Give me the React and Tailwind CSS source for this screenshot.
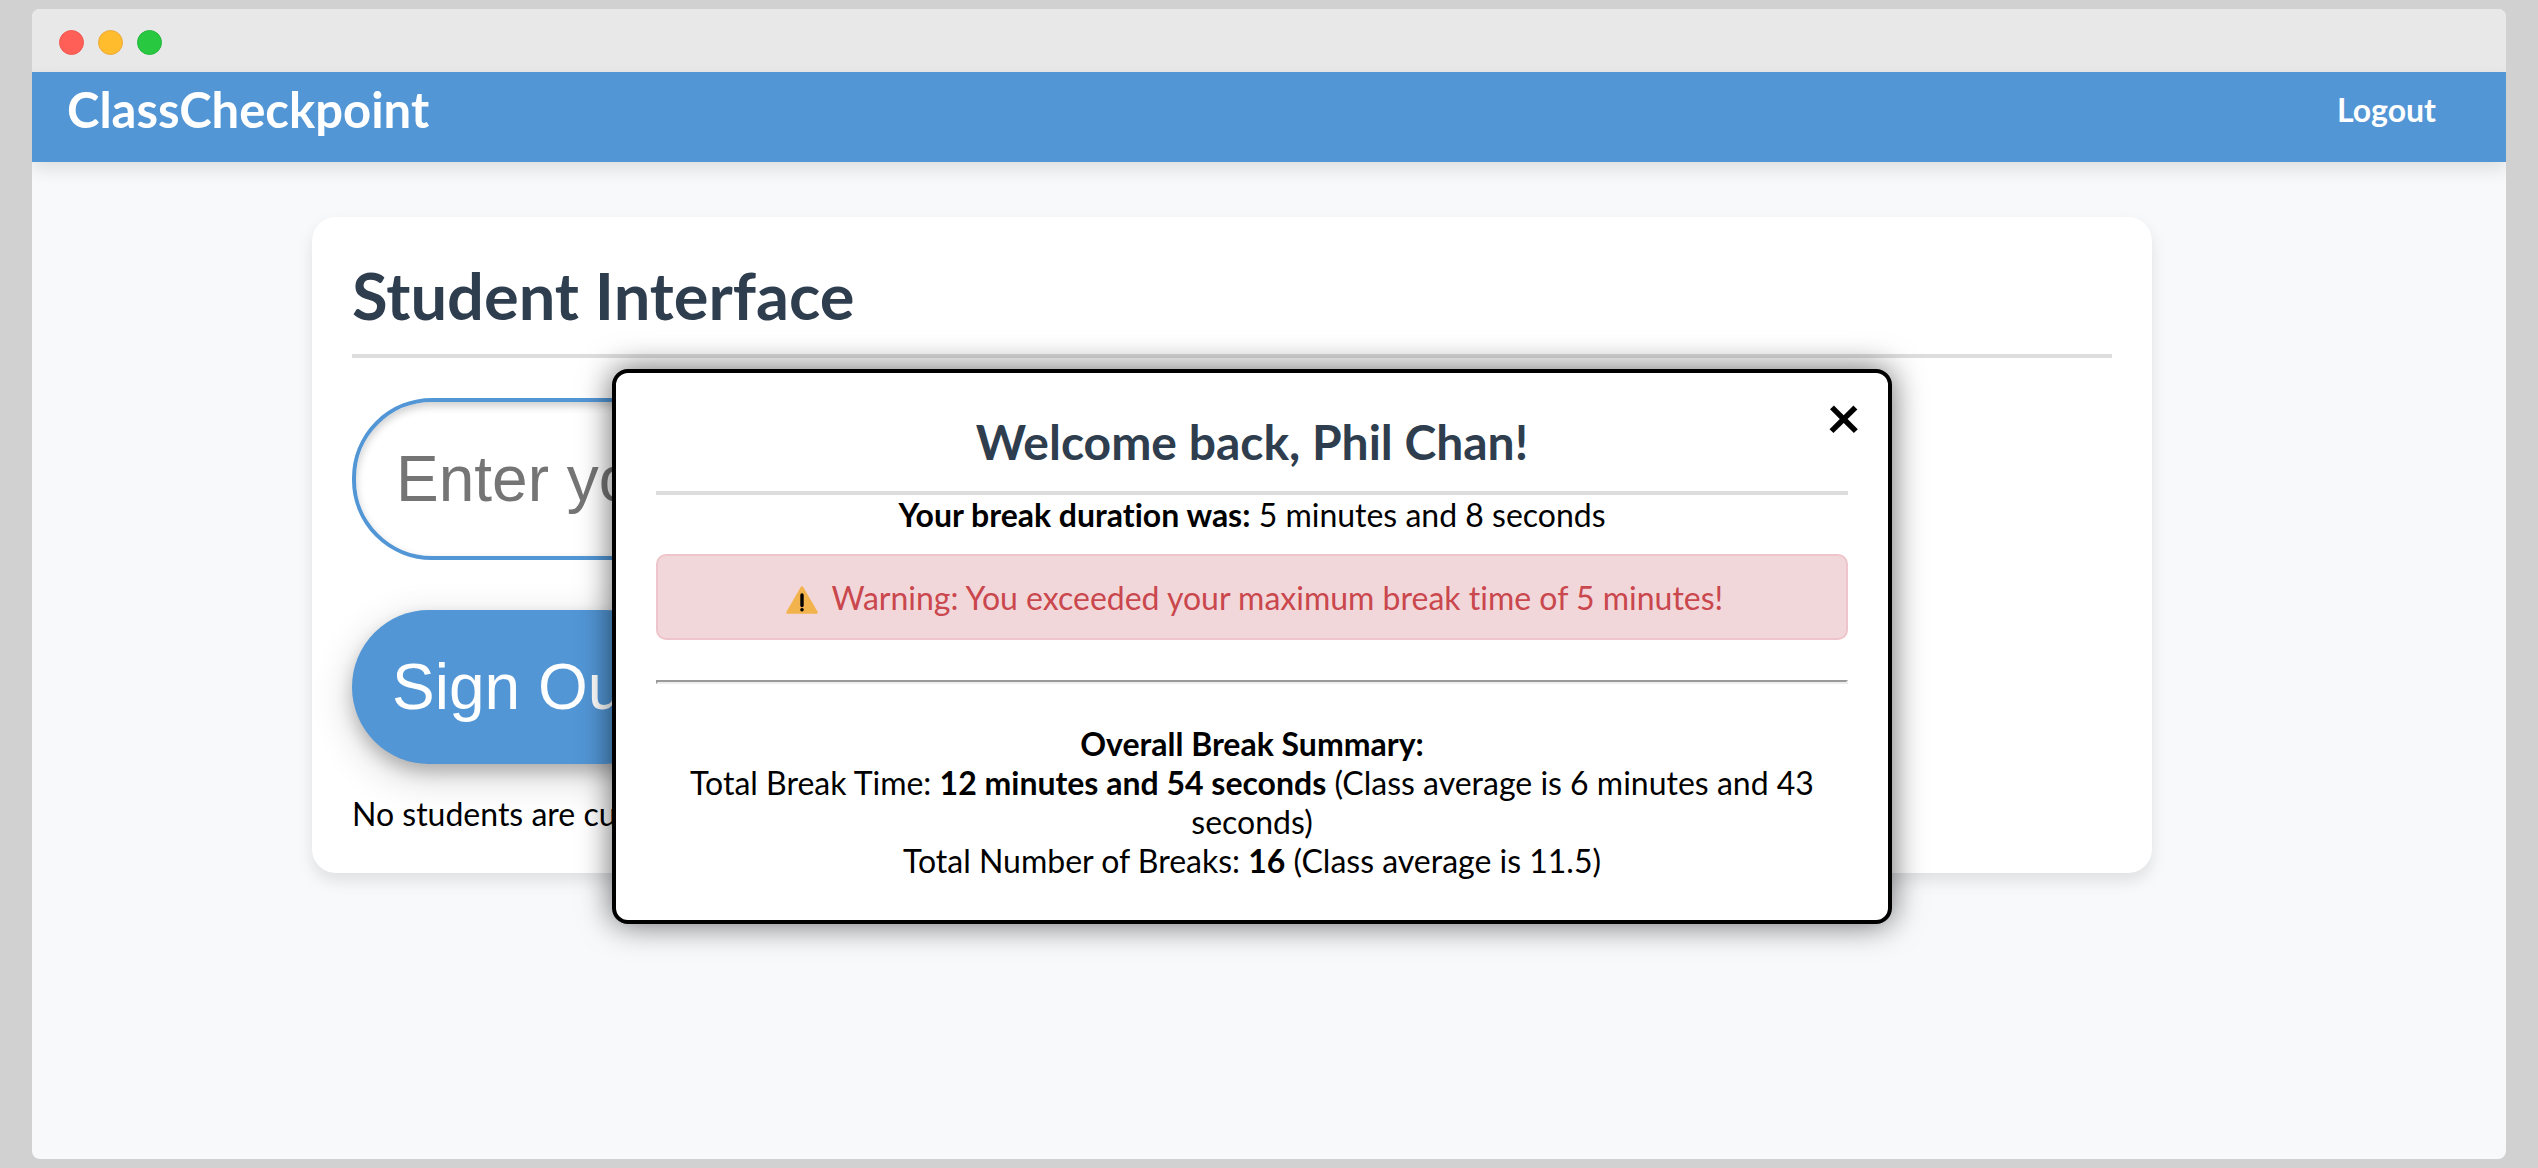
import React, { useState } from 'react';

// --- WINDOW CHROME ---
const TitleBar = () => (
  <div className="flex h-[63px] shrink-0 items-center gap-[14px] bg-[#e8e8e8] px-[27px] pt-1">
    <span className="h-[25px] w-[25px] rounded-full border border-[#f05850] bg-[#ff5f57]"></span>
    <span className="h-[25px] w-[25px] rounded-full border border-[#eda93b] bg-[#ffbd2e]"></span>
    <span className="h-[25px] w-[25px] rounded-full border border-[#24b53c] bg-[#28c940]"></span>
  </div>
);

const Header = () => (
  <header className="relative flex shrink-0 items-center justify-between bg-[#5296d6] pt-2 pr-[70px] pb-6 pl-[35px] font-bold text-white shadow-[0_8px_16px_rgba(0,0,0,0.1)]">
    <div className="text-[49px] leading-[58px]">ClassCheckpoint</div>
    <a href="#logout" className="text-[32px] leading-[39px]">Logout</a>
  </header>
);

const WarningIcon = () => (
  <svg className="inline-block h-[28px] w-[43px] align-[-4px]" viewBox="0 0 43 28" aria-hidden="true">
    <path d="M21 1.5 35.5 26.5H6.5Z" fill="#f2b24c" stroke="#f2b24c" strokeWidth="2.5" strokeLinejoin="round" />
    <path d="M21 9V19.5" stroke="#000" strokeWidth="3.4" strokeLinecap="round" />
    <circle cx="21" cy="23.7" r="1.8" fill="#000" />
  </svg>
);

// --- POPUP ---
const BreakSummary = ({ onClose }) => (
  <div
    role="dialog"
    aria-labelledby="welcome"
    className="relative w-full max-w-[1280px] rounded-2xl border-4 border-black bg-white p-10 text-center shadow-[0_0_32px_rgba(0,0,0,0.6)]"
  >
    <button
      type="button"
      aria-label="Close"
      onClick={onClose}
      className="absolute top-[10px] right-[27px] text-[60px] leading-[67px] font-bold"
    >
      ×
    </button>

    <h2 id="welcome" className="border-b-4 border-[#ddd] pb-5 text-[48px] leading-[58px] font-bold text-[#2f3e4e]">
      Welcome back, Phil Chan!
    </h2>
    <p><strong>Your break duration was:</strong> 5 minutes and 8 seconds</p>

    <div role="alert" className="my-5 rounded-[10px] border-2 border-[#eec5ca] bg-[#f2d7da] pt-6 pb-[22px] leading-[36px] text-[#c9474d]">
      <WarningIcon /> Warning: You exceeded your maximum break time of 5 minutes!
    </div>

    <hr className="my-10 border-2 border-t-[#9a9a9a] border-r-[#eee] border-b-[#eee] border-l-[#9a9a9a]" />

    <p><strong>Overall Break Summary:</strong></p>
    <p>
      Total Break Time: <strong>12 minutes and 54 seconds</strong> (Class average is 6 minutes and 43 seconds)
    </p>
    <p>Total Number of Breaks: <strong>16</strong> (Class average is 11.5)</p>
  </div>
);

function App() {

  const [showSummary, setShowSummary] = useState(true);

  return (
    <div className="flex min-h-screen bg-[#d1d1d1] px-8 py-[9px] font-['Lato',sans-serif] text-[32px] leading-[39px] text-black [font-variant-ligatures:none]">
      <div className="flex flex-1 flex-col overflow-hidden rounded-lg bg-[#f8f9fb]">

        <TitleBar />

        <div className="relative flex-1">
          <Header />

          <main className="pt-[55px] pr-[74px]">
            <section className="mx-auto max-w-[1840px] rounded-3xl bg-white p-10 shadow-[0_8px_16px_rgba(0,0,0,0.1)]">
              <h1 className="mb-10 border-b-4 border-[#ddd] pb-5 text-[65px] leading-[77px] font-bold text-[#2f3e4e]">
                Student Interface
              </h1>

              <form className="flex flex-col items-start gap-[50px]" onSubmit={(e) => e.preventDefault()}>
                <input
                  type="text"
                  aria-label="Student ID"
                  placeholder="Enter your ID"
                  className="h-[162px] w-[800px] rounded-[80px] border-4 border-[#5296d6] bg-white px-10 font-['Liberation_Sans',sans-serif] text-[64px] leading-[74px] shadow-[inset_0_4px_8px_rgba(0,0,0,0.2)] placeholder:text-[#757575]"
                />
                <button
                  type="submit"
                  className="rounded-full bg-[#5296d6] p-10 font-['Liberation_Sans',sans-serif] text-[64px] leading-[74px] text-white shadow-[0_8px_16px_rgba(0,0,0,0.2),0_12px_40px_rgba(0,0,0,0.19)]"
                >
                  Sign Out
                </button>
              </form>

              <p className="mt-[30px]">No students are currently signed out.</p>
            </section>
          </main>

          {/* Break summary sits over the page */}
          {showSummary && (
            <div className="absolute inset-0 flex items-start justify-center pt-[297px] pr-[34px]">
              <BreakSummary onClose={() => setShowSummary(false)} />
            </div>
          )}
        </div>

      </div>
    </div>
  );
}

export default App;
